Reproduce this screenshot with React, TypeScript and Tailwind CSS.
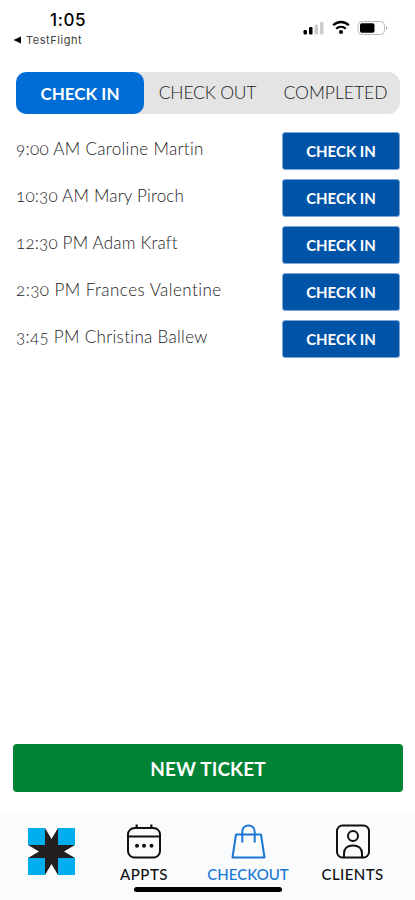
const appointments = [
  { time: "9:00 AM", name: "Caroline Martin", tracking: "tracking-[0.32px]" },
  { time: "10:30 AM", name: "Mary Piroch", tracking: "tracking-[0.2px]" },
  { time: "12:30 PM", name: "Adam Kraft", tracking: "tracking-[0.2px]" },
  { time: "2:30 PM", name: "Frances Valentine", tracking: "tracking-[0.46px]" },
  { time: "3:45 PM", name: "Christina Ballew", tracking: "tracking-[0.32px]" },
];

const StatusBar = () => (
  <header className="flex h-[72px] items-start justify-between pr-[27px] pl-[13px]">
    <div className="pt-[9px] text-black">
      <div className="pl-[37px] font-['Inter'] text-[17px] leading-[22px] font-medium tracking-[0.6px]">
        1:05
      </div>
      <div className="flex items-center gap-[5px] font-['Inter'] text-[11px] leading-[18px] tracking-[0.55px] text-[#444]">
        <svg width="8" height="8" viewBox="0 0 8 8">
          <path d="M0.5 4L8 0.5V7.5Z" fill="#000" />
        </svg>
        TestFlight
      </div>
    </div>
    <div className="flex items-center gap-[7px] pt-[20px]">
      <svg width="22" height="16" viewBox="0 0 22 16">
        <rect x="0.5" y="10" width="3.5" height="4.5" rx="1.2" fill="#000" />
        <rect x="6" y="7" width="3.5" height="7.5" rx="1.2" fill="#000" />
        <rect x="11.5" y="4.5" width="3.5" height="10" rx="1.2" fill="#ccc" />
        <rect x="17" y="2" width="3.5" height="12.5" rx="1.2" fill="#ccc" />
      </svg>
      <svg width="18" height="16" viewBox="0 0 18 16" fill="none" stroke="#000">
        <path d="M1.2 5.3C5.6 0.9 12.4 0.9 16.8 5.3" strokeWidth="2.3" />
        <path d="M4.2 8.7C6.9 6.1 11.1 6.1 13.8 8.7" strokeWidth="2.2" />
        <circle cx="9" cy="12" r="2.1" fill="#000" stroke="none" />
      </svg>
      <svg width="31" height="16" viewBox="0 0 31 16">
        <rect
          x="1"
          y="1.5"
          width="26.5"
          height="13"
          rx="4"
          fill="#fff"
          stroke="#bbb"
        />
        <rect x="3" y="3.2" width="14.5" height="9.6" rx="1.8" fill="#000" />
        <path d="M29 6C30.8 6.7 30.8 9.3 29 10Z" fill="#aaa" />
      </svg>
    </div>
  </header>
);

const Tabs = () => (
  <div className="mr-[15px] ml-4 flex h-[42px] rounded-[12px] bg-[#e4e4e4] text-[17.5px] font-light whitespace-nowrap text-[#222]">
    <button className="w-32 rounded-[10px] bg-[#006cd5] pt-px text-[17px] font-bold text-white">
      CHECK IN
    </button>
    <button className="w-[127px] pt-px tracking-[-0.2px]">CHECK OUT</button>
    <button className="w-[129px] pt-px">COMPLETED</button>
  </div>
);

const AppointmentList = () => (
  <ul className="mt-[18px] flex flex-col gap-[9px] pr-[15px] pl-4">
    {appointments.map(({ time, name, tracking }) => (
      <li key={time} className="flex h-[38px] items-center justify-between">
        <span
          className={`-mt-[4px] text-[17px] font-light whitespace-nowrap text-[#222] [font-feature-settings:'onum'] ${tracking}`}
        >
          {time} {name}
        </span>
        <button className="h-[38px] w-[118px] rounded-[3px] border border-[#7da7d9] bg-[#0054a8] text-[15px] font-bold text-white">
          CHECK IN
        </button>
      </li>
    ))}
  </ul>
);

const Logo = () => (
  <svg width="47" height="47" viewBox="0 0 47 47">
    <path
      d="M17 0L23.5 11L30 0L31 17H47L36 23.5L47 30H31L30 47L23.5 36L17 47L16 30H0L11 23.5L0 17H16Z"
      fill="#231f20"
    />
    <path d="M0 0H17V17H0ZM30 0H47V17H30ZM0 30H17V47H0ZM30 30H47V47H30Z" fill="#00aeef" />
  </svg>
);

const CalendarIcon = () => (
  <svg width="34" height="35" viewBox="0 0 34 35" fill="none" stroke="#111" strokeWidth="2">
    <rect x="1" y="4" width="32" height="29.5" rx="6.5" />
    <path d="M1 12.5H33" />
    <path d="M9.7 0.5V4M24.3 0.5V4" strokeWidth="2.2" />
    <g fill="#111" stroke="none">
      <circle cx="10" cy="21.8" r="2" />
      <circle cx="17" cy="21.8" r="2" />
      <circle cx="24.5" cy="21.8" r="2" />
    </g>
  </svg>
);

const BagIcon = () => (
  <svg width="35" height="35" viewBox="0 0 35 35" fill="none" stroke="#1976d2" strokeWidth="2">
    <path d="M5 10.5H30L33.5 33.5H1.5Z" strokeLinejoin="round" />
    <path d="M11.3 18.5V8C11.3 4 13.8 1.5 17.5 1.5S23.7 4 23.7 8V18.5" />
  </svg>
);

const ClientIcon = () => (
  <svg width="34" height="35" viewBox="0 0 34 35" fill="none" stroke="#111" strokeWidth="2">
    <rect x="1" y="1.5" width="32" height="32" rx="5.5" />
    <circle cx="17" cy="12" r="5" />
    <path d="M8 33V29.5C8 24.5 11.5 21.5 17 21.5S26 24.5 26 29.5V33" />
  </svg>
);

const NavBar = () => (
  <nav className="relative flex h-[86px] bg-[#f9fbfd] text-[15px] leading-[18px] font-medium text-[#111]">
    <div className="w-[92px] pt-[14px] pl-7">
      <Logo />
    </div>
    <div className="flex w-[104px] flex-col items-center gap-[6px] pt-[10px]">
      <CalendarIcon />
      <span className="tracking-[0.5px]">APPTS</span>
    </div>
    <div className="flex w-[104px] flex-col items-center gap-[6px] pt-[10px] text-[#1976d2]">
      <BagIcon />
      CHECKOUT
    </div>
    <div className="flex w-[105px] flex-col items-center gap-[6px] pt-[10px]">
      <ClientIcon />
      <span className="tracking-[0.4px]">CLIENTS</span>
    </div>
    <div className="absolute top-[73px] left-[134px] h-[5px] w-[148px] rounded-full bg-black" />
  </nav>
);

export default function App() {
  return (
    <div className="flex h-[900px] w-[415px] flex-col overflow-hidden bg-white font-['Lato',sans-serif]">
      <StatusBar />
      <Tabs />
      <AppointmentList />
      <button className="mt-auto mr-3 mb-[22px] ml-[13px] h-12 shrink-0 rounded-[4px] bg-[#008335] pt-[2px] text-[19px] font-bold tracking-[0.1px] text-white">
        NEW TICKET
      </button>
      <NavBar />
    </div>
  );
}
